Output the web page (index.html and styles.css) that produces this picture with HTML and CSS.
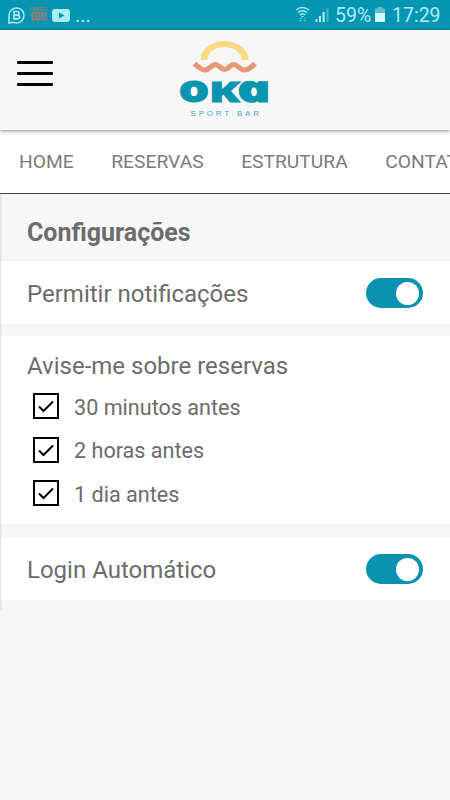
FILE: index.html
```html
<!DOCTYPE html>
<html lang="pt-BR">
<head>
<meta charset="utf-8">
<title>Oka Sport Bar</title>
<link rel="stylesheet" href="styles.css">
</head>
<body>
<div class="status">
  <svg class="notices" width="74" height="30" viewBox="0 0 74 30">
    <g fill="none" stroke="#a9edf7" stroke-width="1.5">
      <path d="M9 23V15.500a7.500 7.500 0 1 1 4.200 6.700Z"/>
      <path d="M14 11.500h3q2 0 2 1.800t-2 1.800h-3zm0 3.600h3.300q2.200 0 2.200 1.900t-2.200 1.900H14z" stroke-width="1.600"/>
    </g>
    <g fill="none" stroke="#917f78">
      <path d="M31 7.500h16M31 10h16" stroke-dasharray="2 1" stroke-width="1.300"/>
      <path d="M30.500 13h16M31 16h15M31 19h15" stroke-width="1.500"/>
      <path d="M32.500 12v10M36 12v9M39 12v9M42 12v9M45.500 12v10" stroke-width="1.500"/>
    </g>
    <rect x="52" y="9" width="18" height="13" rx="3" fill="#a9edf7"/>
    <path d="M59 12.500v6l5.500-3z" fill="#0395b2"/>
  </svg>
  <span class="dots">...</span>
  <svg class="signal" width="38" height="30" viewBox="0 0 38 30">
    <g fill="none" stroke="#a9edf7" stroke-width="1.500">
      <path d="M4 10q6.500-5 13 0M5.800 12.500q4.700-3.600 9.400 0M7.700 15q2.800-2 5.600 0"/>
    </g>
    <path d="M10.500 17.500l-1.500-1.500h3z" fill="#a9edf7"/>
    <path d="M7 19l1.500-1.500L10 19zm0 1h3l-1.500 2zm4.500-1l1.500-1.500 1.500 1.500zm0 1h3L13 22z" fill="#60c4d4"/>
    <path d="M23.500 19h2v3h-2zM27 16h2v6h-2zM30.500 12h2.200v10h-2.200z" fill="#a9edf7"/>
    <path d="M34.500 8.500h2v13.500h-2z" fill="#4cb5c9"/>
  </svg>
  <span class="percent">59%</span>
  <svg class="battery" width="10" height="30" viewBox="0 0 10 30">
    <path d="M2.500 7h5v1.500H10V22H0V8.500h2.500z" fill="#60bed0"/>
    <path d="M0 13h10v9H0z" fill="#d4fbff"/>
  </svg>
  <span class="clock">17:29</span>
</div>
<header class="header">
  <div class="burger"><i></i><i></i><i></i></div>
  <svg class="logo" width="100" height="90" viewBox="175 35 100 90">
    <path d="M200.500 60V59.500A24 18.500 0 0 1 248.500 59.500V60H241.500V59.500A17 12.500 0 0 0 207.500 59.500V60Z" fill="#fbda85"/>
    <path d="M194.500 63.500C200 69 202 70 205 70C210 70 211 64.500 215.500 64.500C219 64.500 221 69.500 224.500 69.500C228.500 69.500 230 64.500 233.500 64.500C238 64.500 239.500 70 244.500 70C248 70 250 68.500 255 63.500" fill="none" stroke="#e59873" stroke-width="5.200"/>
    <g class="brand">
      <text x="178.500" y="102" textLength="31" lengthAdjust="spacingAndGlyphs" font-size="37">o</text>
      <text x="209" y="102" textLength="31" lengthAdjust="spacingAndGlyphs" font-size="28.500">K</text>
      <text class="brand-a" transform="translate(240 102) skewX(18)" textLength="34.500" lengthAdjust="spacingAndGlyphs" font-size="37">a</text>
    </g>
    <text class="tagline" x="190.500" y="115.500" textLength="68.500" font-size="8">SPORT BAR</text>
  </svg>
</header>
<nav class="nav"><a>HOME</a><a>RESERVAS</a><a>ESTRUTURA</a><a>CONTATO</a></nav>
<main class="settings">
  <h1>Configurações</h1>
  <section class="row"><span>Permitir notificações</span><b class="toggle"></b></section>
  <section class="alerts">
    <h2>Avise-me sobre reservas</h2>
    <div class="option"><svg class="check" viewBox="0 0 26 26"><path class="box" d="M1 1h24v24H1z"/><path d="M6 13.500l4.500 4.500L20 8.500"/></svg><span>30 minutos antes</span></div>
    <div class="option"><svg class="check" viewBox="0 0 26 26"><path class="box" d="M1 1h24v24H1z"/><path d="M6 13.500l4.500 4.500L20 8.500"/></svg><span>2 horas antes</span></div>
    <div class="option"><svg class="check" viewBox="0 0 26 26"><path class="box" d="M1 1h24v24H1z"/><path d="M6 13.500l4.500 4.500L20 8.500"/></svg><span>1 dia antes</span></div>
  </section>
  <section class="row"><span>Login Automático</span><b class="toggle"></b></section>
</main>
</body>
</html>
```
FILE: styles.css
```css
* { box-sizing: border-box; }
body {
  margin: 0;
  height: 800px;
  overflow: hidden;
  background: #f7f7f7;
  color: #6c6c6c;
  font-family: Roboto, sans-serif;
}
svg { display: block; flex: none; }
.status {
  height: 30px;
  display: flex;
  align-items: center;
  background: #0395b2;
  color: #a9edf7;
  font-size: 20px;
  line-height: 30px;
  white-space: nowrap;
}
.dots { width: 217px; margin-left: 1px; }
.signal { margin-right: 5px; }
.percent { width: 40px; padding-top: 2px; font-size: 19.5px; }
.clock { padding-top: 2px; margin-left: 7px; font-size: 19.5px; }
.header {
  position: relative;
  height: 100px;
  display: flex;
  align-items: flex-start;
  background: #f7f7f7;
  box-shadow: 0 1px 4px rgba(0, 0, 0, .45);
}
.burger {
  width: 36px;
  margin: 31px 122px 0 17px;
  display: flex;
  flex-direction: column;
  gap: 8px;
}
.burger i { height: 3px; background: #000; border-radius: 1px; }
.logo { margin-top: 5px; }
.brand { fill: #0895b0; stroke: #0895b0; stroke-width: .8; font-family: "Open Sans", sans-serif; font-weight: 800; }
.brand-a { font-style: italic; }
.tagline { fill: #4aa9bd; font-family: "Liberation Sans", sans-serif; }
.nav {
  height: 64px;
  display: flex;
  align-items: center;
  padding: 0 0 0 19px;
  gap: 37.5px;
  overflow: hidden;
  background: #fff;
  border-bottom: 1px solid #444;
  color: #7b7b7b;
  font-size: 19.25px;
  white-space: nowrap;
}
.settings { box-shadow: inset 3px 0 3px -2px rgba(0, 0, 0, .12); height: 416px; }
h1 {
  margin: 0;
  height: 67px;
  padding: 10px 27px 0;
  font-size: 25px;
  line-height: 58px;
  font-weight: 700;
}
.row {
  height: 63px;
  padding: 0 27px 0 26px;
  margin-left: 1px;
  display: flex;
  align-items: center;
  justify-content: space-between;
  background: #fff;
  font-size: 24px;
}
.row span { padding-top: 2px; }
.toggle { width: 57px; height: 30px; border-radius: 15px; padding: 4px 0 0 30px; background: #0993b0; }
.toggle::before { content: ""; display: block; width: 23px; height: 23px; border-radius: 50%; background: #fff; }
.alerts { height: 188px; margin: 12px 0 13px 1px; padding: 16px 26px 0; background: #fff; }
h2 { margin: 0; font-size: 24px; line-height: 28px; font-weight: 400; }
.option { height: 43.5px; display: flex; align-items: center; gap: 15px; padding-left: 6px; font-size: 21.6px; }
.option span { padding-top: 3px; }
.alerts h2 + .option { margin-top: 4px; }
.check { width: 26px; height: 26px; margin-top: 1px; fill: none; stroke: #000; stroke-width: 2; }
```
